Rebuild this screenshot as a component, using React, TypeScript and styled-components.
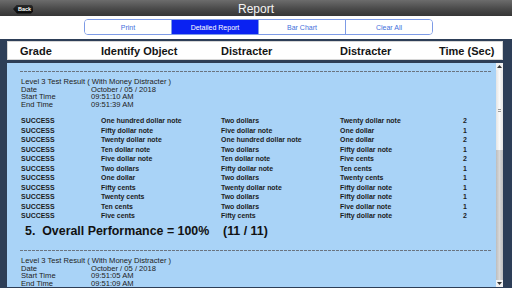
import React from 'react';
import styled, { createGlobalStyle } from 'styled-components';

const Global = createGlobalStyle`
  html, body { margin: 0; padding: 0; width: 512px; height: 288px; overflow: hidden; background: #2d3e57; }
  body { font-family: "Liberation Sans", Arial, sans-serif; }
  * { box-sizing: border-box; }
`;

const Screen = styled.div`
  width: 512px;
  height: 288px;
  display: flex;
  flex-direction: column;
  overflow: hidden;
`;

const TopBar = styled.header`
  height: 16px;
  flex: none;
  display: grid;
  grid-template-columns: 1fr auto 1fr;
  align-items: center;
  padding: 0 13px;
  background: linear-gradient(#6c6c6c, #4a4a4a 55%, #363636);
`;

const BackButton = styled.button`
  justify-self: start;
  height: 9px;
  width: 20px;
  margin-top: 1px;
  border: none;
  padding: 0 0 0 3px;
  background: linear-gradient(#2a2a2a, #050505);
  color: #fff;
  font-family: "Liberation Sans", Arial, sans-serif;
  font-weight: bold;
  font-size: 5.5px;
  line-height: 9px;
  clip-path: polygon(0 50%, 4px 0, calc(100% - 2px) 0, 100% 2px, 100% calc(100% - 2px), calc(100% - 2px) 100%, 4px 100%);
`;

const Title = styled.h1`
  margin: 0;
  font-weight: normal;
  font-size: 12px;
  line-height: 16px;
  color: #f4f4f4;
  padding-top: 1px;
`;

const SegmentBand = styled.nav`
  height: 23px;
  flex: none;
  background: #fff;
  padding: 3px 0 0 84px;
`;

const Segmented = styled.div`
  width: 349px;
  height: 16px;
  display: flex;
  border: 1px solid #7d9be6;
  border-radius: 4px;
  overflow: hidden;
`;

const Segment = styled.div<{ $active?: boolean; $first?: boolean }>`
  flex: 1;
  display: flex;
  align-items: center;
  justify-content: center;
  font-size: 7px;
  color: ${p => (p.$active ? '#fff' : '#3f6fdc')};
  background: ${p => (p.$active ? '#0a22f2' : '#fff')};
  border-left: ${p => (p.$first ? 'none' : '1px solid #7d9be6')};
`;

const Main = styled.main`
  flex: 1;
  display: flex;
  flex-direction: column;
  padding: 2px 9px 1px 7px;
  min-height: 0;
`;

const HeaderBox = styled.div`
  height: 19px;
  flex: none;
  background: #fff;
  border: 1px solid #d6d6d6;
  display: grid;
  grid-template-columns: 81px 120px 119px 99px auto;
  align-items: center;
  padding-left: 12px;
  margin-bottom: 3px;
`;

const HeaderCell = styled.div`
  font-weight: bold;
  font-size: 11px;
  color: #141414;
`;

const Panel = styled.div`
  flex: 1;
  display: flex;
  min-height: 0;
`;

const ScrollArea = styled.div`
  flex: 1;
  background: #a9d3f7;
  overflow: hidden;
  padding: 8px 4px 0 14px;
`;

const ScrollBar = styled.div`
  width: 7px;
  display: flex;
  flex-direction: column;
  background: linear-gradient(90deg, #bdbdbd, #d8d8d8 50%, #bdbdbd);
`;

const Arrow = styled.div`
  height: 7px;
  flex: none;
  display: flex;
  align-items: center;
  justify-content: center;
  background: #f2f2f2;
`;

const Thumb = styled.div`
  height: 80px;
  flex: none;
  background: linear-gradient(90deg, #e4e4e4, #fafafa 50%, #e4e4e4);
  display: flex;
  align-items: center;
  justify-content: center;
`;

const Grip = styled.div`
  width: 3px;
  height: 3px;
  border-top: 1px solid #999;
  border-bottom: 1px solid #999;
`;

const Track = styled.div`
  flex: 1;
`;

const Section = styled.section`
  padding-bottom: 12px;
`;

const Dash = styled.div`
  height: 1px;
  margin-left: -1px;
  background: repeating-linear-gradient(90deg, #6a7480 0 3px, transparent 3px 4px);
`;

const Info = styled.div`
  margin-top: 6px;
  display: grid;
  grid-template-columns: 70px auto;
  font-size: 7.6px;
  line-height: 7.7px;
  color: #222;
`;

const InfoTitle = styled.div`
  grid-column: 1 / 3;
`;

const Rows = styled.div`
  margin-top: 7.5px;
`;

const Row = styled.div`
  display: grid;
  grid-template-columns: 80px 120px 119px 123px auto;
  font-weight: bold;
  font-size: 6.95px;
  line-height: 9.5px;
  color: #1c1c1c;
  white-space: nowrap;
`;

const Overall = styled.div`
  margin-top: 3px;
  padding-left: 4px;
  font-weight: bold;
  font-size: 12.4px;
  line-height: 14px;
  white-space: pre;
  color: #111;
`;

type R = [string, string, string, string, string];

const rows: R[] = [
  ['SUCCESS', 'One hundred dollar note', 'Two dollars', 'Twenty dollar note', '2'],
  ['SUCCESS', 'Fifty dollar note', 'Five dollar note', 'One dollar', '1'],
  ['SUCCESS', 'Twenty dollar note', 'One hundred dollar note', 'One dollar', '2'],
  ['SUCCESS', 'Ten dollar note', 'Two dollars', 'Fifty dollar note', '1'],
  ['SUCCESS', 'Five dollar note', 'Ten dollar note', 'Five cents', '2'],
  ['SUCCESS', 'Two dollars', 'Fifty dollar note', 'Ten cents', '1'],
  ['SUCCESS', 'One dollar', 'Two dollars', 'Twenty cents', '1'],
  ['SUCCESS', 'Fifty cents', 'Twenty dollar note', 'Fifty dollar note', '1'],
  ['SUCCESS', 'Twenty cents', 'Two dollars', 'Fifty dollar note', '1'],
  ['SUCCESS', 'Ten cents', 'Two dollars', 'Five dollar note', '1'],
  ['SUCCESS', 'Five cents', 'Fifty cents', 'Fifty dollar note', '2'],
];

const InfoBlock = ({ start, end }: { start: string; end: string }) => (
  <Info>
    <InfoTitle>Level 3 Test Result ( With Money Distracter )</InfoTitle>
    <div>Date</div>
    <div>October / 05 / 2018</div>
    <div>Start Time</div>
    <div>{start}</div>
    <div>End Time</div>
    <div>{end}</div>
  </Info>
);

export default function App() {
  return (
    <Screen>
      <Global />
      <TopBar>
        <BackButton>Back</BackButton>
        <Title>Report</Title>
        <span />
      </TopBar>
      <SegmentBand>
        <Segmented>
          <Segment $first>Print</Segment>
          <Segment $active>Detailed Report</Segment>
          <Segment>Bar Chart</Segment>
          <Segment>Clear All</Segment>
        </Segmented>
      </SegmentBand>
      <Main>
        <HeaderBox>
          <HeaderCell>Grade</HeaderCell>
          <HeaderCell>Identify Object</HeaderCell>
          <HeaderCell>Distracter</HeaderCell>
          <HeaderCell>Distracter</HeaderCell>
          <HeaderCell>Time (Sec)</HeaderCell>
        </HeaderBox>
        <Panel>
          <ScrollArea>
            <Section>
              <Dash />
              <InfoBlock start="09:51:10 AM" end="09:51:39 AM" />
              <Rows>
                {rows.map((r, i) => (
                  <Row key={i}>
                    {r.map((c, j) => (
                      <div key={j}>{c}</div>
                    ))}
                  </Row>
                ))}
              </Rows>
              <Overall>{'5.  Overall Performance = 100%    (11 / 11)'}</Overall>
            </Section>
            <Section>
              <Dash />
              <InfoBlock start="09:51:05 AM" end="09:51:09 AM" />
            </Section>
          </ScrollArea>
          <ScrollBar>
            <Arrow>
              <svg width="5" height="3" viewBox="0 0 5 3"><path d="M0 3 L2.5 0 L5 3 Z" fill="#333" /></svg>
            </Arrow>
            <Thumb>
              <Grip />
            </Thumb>
            <Track />
            <Arrow>
              <svg width="5" height="3" viewBox="0 0 5 3"><path d="M0 0 L2.5 3 L5 0 Z" fill="#333" /></svg>
            </Arrow>
          </ScrollBar>
        </Panel>
      </Main>
    </Screen>
  );
}
